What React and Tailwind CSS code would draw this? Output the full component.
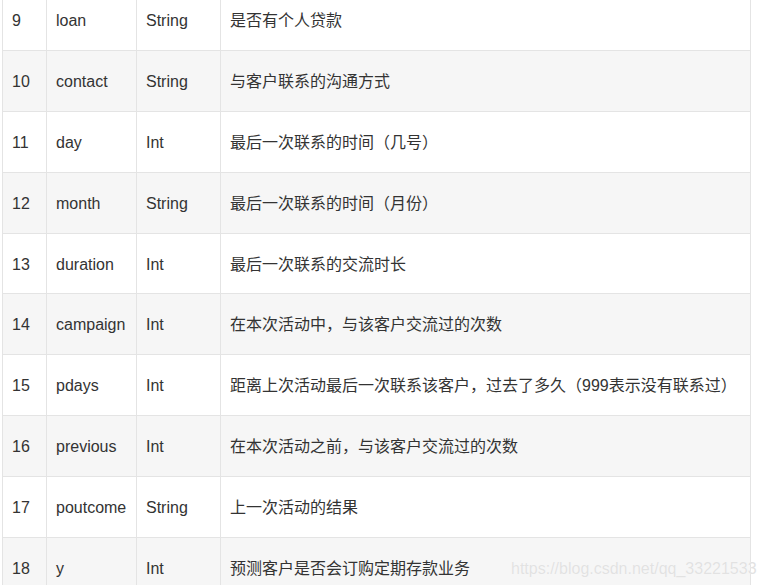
import React from 'react';

const rows = [
  ['9', 'loan', 'String', '是否有个人贷款'],
  ['10', 'contact', 'String', '与客户联系的沟通方式'],
  ['11', 'day', 'Int', '最后一次联系的时间（几号）'],
  ['12', 'month', 'String', '最后一次联系的时间（月份）'],
  ['13', 'duration', 'Int', '最后一次联系的交流时长'],
  ['14', 'campaign', 'Int', '在本次活动中，与该客户交流过的次数'],
  ['15', 'pdays', 'Int', '距离上次活动最后一次联系该客户，过去了多久（999表示没有联系过）'],
  ['16', 'previous', 'Int', '在本次活动之前，与该客户交流过的次数'],
  ['17', 'poutcome', 'String', '上一次活动的结果'],
  ['18', 'y', 'Int', '预测客户是否会订购定期存款业务'],
];

const App = () => {
  return (
    <div className="relative w-[764px] h-[585px] overflow-hidden bg-white text-[#333] text-[16px] font-['Liberation_Sans','Noto_Sans_CJK_SC',sans-serif]">
      <div className="ml-[2px] -mt-[10px] w-[749px] border-x border-[#e4e4e4]">
        {rows.map((r, i) => (
          <div
            key={r[0]}
            className={`flex h-[60.9px] border-b border-[#e4e4e4] ${i % 2 === 1 ? 'bg-[#f6f6f6]' : 'bg-white'}`}
          >
            <div className="w-[44px] shrink-0 flex items-center pl-[9px] pt-[2px] border-r border-[#e4e4e4]">{r[0]}</div>
            <div className="w-[90px] shrink-0 flex items-center pl-[9px] pt-[2px] border-r border-[#e4e4e4]">{r[1]}</div>
            <div className="w-[84px] shrink-0 flex items-center pl-[9px] pt-[2px] border-r border-[#e4e4e4]">{r[2]}</div>
            <div className="flex-1 flex items-center pl-[9px] pt-[2px] whitespace-nowrap">{r[3]}</div>
          </div>
        ))}
      </div>
      <div className="absolute left-[511px] top-[557px] text-[16px] text-[#e2e2e2] [text-shadow:0_0_1px_#ffffff] whitespace-nowrap">
        https://blog.csdn.net/qq_33221533
      </div>
    </div>
  );
};

export default App;
